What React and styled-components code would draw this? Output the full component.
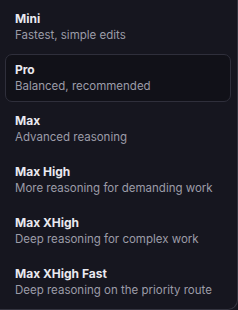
import React from "react";
import styled, { createGlobalStyle } from "styled-components";

const Global = createGlobalStyle`
  html, body {
    margin: 0;
    padding: 0;
    background: #16161f;
  }
  body {
    font-family: Inter, "Noto Sans", sans-serif;
    -webkit-font-smoothing: antialiased;
  }
`;

const Panel = styled.div`
  width: 238px;
  height: 310px;
  box-sizing: border-box;
  background: #16161f;
  border-right: 1px solid #34343f;
  border-bottom: 1px solid #34343f;
  border-bottom-right-radius: 10px;
  padding: 3px 6px 0 5px;
  display: flex;
  flex-direction: column;
  gap: 3px;
`;

const Option = styled.div`
  border: 1px solid ${(p) => (p.$active ? "#2f2f3b" : "transparent")};
  background: ${(p) => (p.$active ? "#111118" : "transparent")};
  border-radius: 7px;
  padding: 7px 9px;
  display: flex;
  flex-direction: column;
`;

const Title = styled.div`
  font-size: 12px;
  font-weight: 700;
  line-height: 16px;
  color: #e9e9ef;
`;

const Sub = styled.div`
  font-size: 11.5px;
  line-height: 16px;
  color: #9c9ca8;
`;

const options = [
  ["Mini", "Fastest, simple edits"],
  ["Pro", "Balanced, recommended", true],
  ["Max", "Advanced reasoning"],
  ["Max High", "More reasoning for demanding work"],
  ["Max XHigh", "Deep reasoning for complex work"],
  ["Max XHigh Fast", "Deep reasoning on the priority route"],
];

export default function App() {
  return (
    <>
      <Global />
      <Panel>
        {options.map(([t, s, a]) => (
          <Option key={t} $active={a}>
            <Title>{t}</Title>
            <Sub>{s}</Sub>
          </Option>
        ))}
      </Panel>
    </>
  );
}
